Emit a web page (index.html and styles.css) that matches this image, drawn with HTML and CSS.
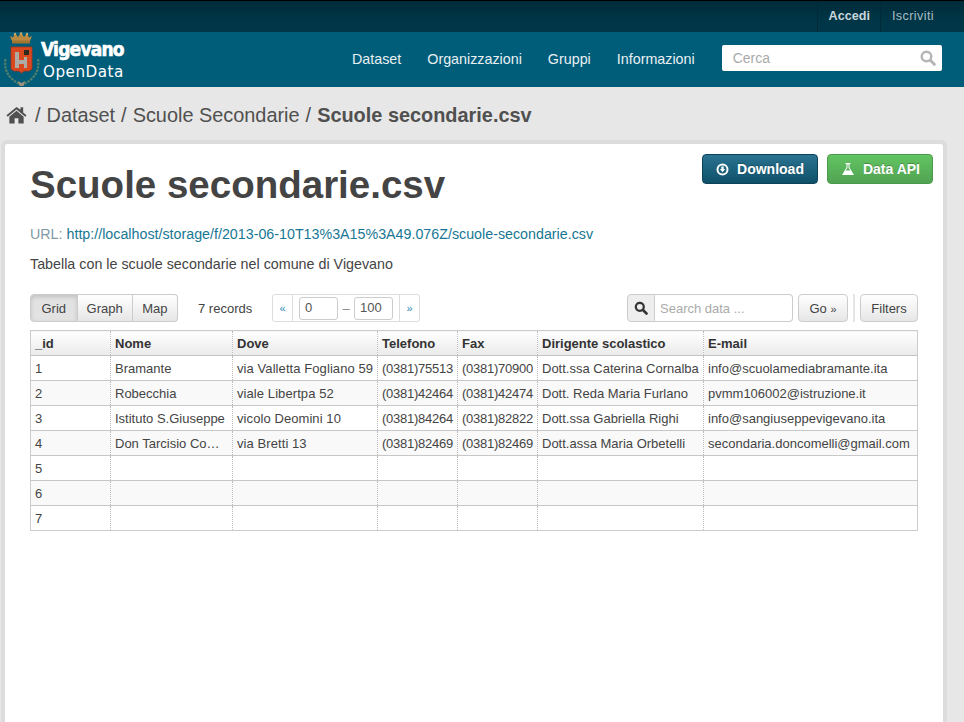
FILE: index.html
```html
<!DOCTYPE html>
<html lang="it">
<head>
    <meta charset="UTF-8">
    <title>Scuole secondarie.csv - Vigevano OpenData</title>
    <link rel="stylesheet" href="styles.css">
</head>
<body>
<div class="page">
    <div class="account-bar">
        <a class="account-link strong" href="#">Accedi</a>
        <a class="account-link" href="#">Iscriviti</a>
    </div>

    <header class="masthead">
        <a class="logo" href="#">
            <svg class="logo-crest" width="38" height="55" viewBox="0 0 38 55">
                <!-- crown -->
                <path d="M9 9L7 4l3 1.500L12 1l3 4 3-4.500L21 5l3-4 2 4.500 3-1.500-2 5z" fill="#b98a42"/>
                <rect x="9" y="8.500" width="18" height="3" fill="#a3742f"/>
                <circle cx="12" cy="2" r="1.200" fill="#c9a768"/>
                <circle cx="18" cy="1.500" r="1.200" fill="#c9a768"/>
                <circle cx="24" cy="2" r="1.200" fill="#c9a768"/>
                <!-- shield -->
                <path d="M8 15h21v22l-3 2-5 0-2.500 2-2.500-2-5 0-3-2z" fill="#d9481f" stroke="#a9351a" stroke-width="0.800"/>
                <path d="M12 20h4v8h5v-3h3v11h-3v-4h-5v4h-4z" fill="#aeaba4"/>
                <rect x="21" y="18" width="5" height="5" fill="#2e2a1e"/>
                <!-- wreath -->
                <g fill="none" stroke="#55806a" stroke-width="2.200" stroke-dasharray="2.500 1">
                    <path d="M2.500 27c-2 12 4 20 14 25"/>
                    <path d="M35 27c2 12-4 20-14 25"/>
                </g>
                <path d="M15 49l3.500 2 3.500-2-1.500 5h-4z" fill="#9c9080"/>
            </svg>
            <span class="logo-text">
                <span class="logo-city">Vigevano</span>
                <span class="logo-sub">OpenData</span>
            </span>
        </a>
        <nav class="main-nav">
            <a href="#">Dataset</a>
            <a href="#">Organizzazioni</a>
            <a href="#">Gruppi</a>
            <a href="#">Informazioni</a>
        </nav>
        <div class="site-search">
            <span>Cerca</span>
            <svg width="16" height="16" viewBox="0 0 16 16">
                <circle cx="6.500" cy="6.500" r="4.800" fill="none" stroke="#b5b5b5" stroke-width="2.400"/>
                <path d="M10.300 10.300l4 4" stroke="#b5b5b5" stroke-width="3" stroke-linecap="round"/>
            </svg>
        </div>
    </header>

    <div class="breadcrumb">
        <svg class="home-icon" width="21" height="18" viewBox="0 0 22 18">
            <path d="M11 0.500L0.500 9.300l1.300 1.500L11 3.200l9.200 7.600 1.300-1.500-3.500-3V1h-2.800v2.600z" fill="#505050"/>
            <path d="M11 4.600L3.500 10.800V18h5.500v-5.500h4V18h5.500v-7.200z" fill="#505050"/>
        </svg>
        <span class="sep">/</span><a href="#">Dataset</a>
        <span class="sep">/</span><a href="#">Scuole Secondarie</a>
        <span class="sep">/</span><a class="active" href="#">Scuole secondarie.csv</a>
    </div>

    <main class="card">
        <div class="title-row">
            <h1>Scuole secondarie.csv</h1>
            <div class="actions">
                <a class="btn-big btn-blue" href="#">
                    <svg width="13" height="13" viewBox="0 0 13 13">
                        <circle cx="6.500" cy="6.500" r="5" fill="none" stroke="#fff" stroke-width="2"/>
                        <path d="M5.300 3.500h2.400v2.500h1.500L6.500 9.200 3.800 6h1.500z" fill="#fff"/>
                    </svg>
                    Download
                </a>
                <a class="btn-big btn-green" href="#">
                    <svg width="14" height="14" viewBox="0 0 14 14">
                        <path d="M4.500 1h5v1h-1v3.500L13 13H1l4.500-7.500V2h-1z" fill="#fff"/>
                        <path d="M6.500 2.500v3.300L4.800 8.500h4.400L7.500 5.800V2.500z" fill="#5cb25c"/>
                    </svg>
                    Data API
                </a>
            </div>
        </div>
        <p class="url"><span>URL:</span> <a href="#">http://localhost/storage/f/2013-06-10T13%3A15%3A49.076Z/scuole-secondarie.csv</a></p>
        <p class="desc">Tabella con le scuole secondarie nel comune di Vigevano</p>

        <div class="toolbar">
            <div class="btn-group">
                <a class="tool-btn on" href="#">Grid</a>
                <a class="tool-btn" href="#">Graph</a>
                <a class="tool-btn" href="#">Map</a>
            </div>
            <span class="records">7 records</span>
            <div class="pager">
                <a class="pager-arrow" href="#">«</a>
                <div class="pager-mid">
                    <span class="pager-input">0</span>
                    <span class="pager-dash">–</span>
                    <span class="pager-input">100</span>
                </div>
                <a class="pager-arrow" href="#">»</a>
            </div>
            <div class="toolbar-right">
                <div class="data-search">
                    <span class="data-search-icon">
                        <svg width="14" height="14" viewBox="0 0 14 14">
                            <circle cx="5.800" cy="5.800" r="4" fill="none" stroke="#333" stroke-width="2.200"/>
                            <path d="M9 9l3.500 3.500" stroke="#333" stroke-width="2.600" stroke-linecap="round"/>
                        </svg>
                    </span>
                    <span class="data-search-input">Search data ...</span>
                </div>
                <a class="tool-btn single go" href="#">Go <small>»</small></a>
                <span class="divider"></span>
                <a class="tool-btn single filters" href="#">Filters</a>
            </div>
        </div>

        <table class="grid">
            <colgroup>
                <col class="c-id"><col class="c-nome"><col class="c-dove"><col class="c-tel"><col class="c-fax"><col class="c-dir"><col class="c-mail">
            </colgroup>
            <thead>
                <tr><th>_id</th><th>Nome</th><th>Dove</th><th>Telefono</th><th>Fax</th><th>Dirigente scolastico</th><th>E-mail</th></tr>
            </thead>
            <tbody>
                <tr><td>1</td><td>Bramante</td><td>via Valletta Fogliano 59</td><td>(0381)75513</td><td>(0381)70900</td><td>Dott.ssa Caterina Cornalba</td><td>info@scuolamediabramante.ita</td></tr>
                <tr><td>2</td><td>Robecchia</td><td>viale Libertpa 52</td><td>(0381)42464</td><td>(0381)42474</td><td>Dott. Reda Maria Furlano</td><td>pvmm106002@istruzione.it</td></tr>
                <tr><td>3</td><td>Istituto S.Giuseppe</td><td>vicolo Deomini 10</td><td>(0381)84264</td><td>(0381)82822</td><td>Dott.ssa Gabriella Righi</td><td>info@sangiuseppevigevano.ita</td></tr>
                <tr><td>4</td><td>Don Tarcisio Comelli</td><td>via Bretti 13</td><td>(0381)82469</td><td>(0381)82469</td><td>Dott.assa Maria Orbetelli</td><td>secondaria.doncomelli@gmail.com</td></tr>
                <tr><td>5</td><td></td><td></td><td></td><td></td><td></td><td></td></tr>
                <tr><td>6</td><td></td><td></td><td></td><td></td><td></td><td></td></tr>
                <tr><td>7</td><td></td><td></td><td></td><td></td><td></td><td></td></tr>
            </tbody>
        </table>
    </main>
</div>
</body>
</html>
```

FILE: styles.css
```css
* {
    box-sizing: border-box;
}

html, body {
    margin: 0;
    height: 100%;
    overflow: hidden;
}

body {
    font-family: "Liberation Sans", Arial, sans-serif;
    font-size: 13px;
    color: #444;
    background-color: #e7e7e7;
}

a {
    text-decoration: none;
    color: inherit;
}

.page {
    height: 722px;
    display: flex;
    flex-direction: column;
}

.account-bar {
    height: 32px;
    flex: none;
    display: flex;
    justify-content: flex-end;
    padding-right: 19px;
    border-top: 1px solid #000;
    background: linear-gradient(#002c3a, #003546 60%, #003748);
}

.account-link {
    height: 31px;
    line-height: 30px;
    padding: 0 11px;
    font-size: 12.600px;
    letter-spacing: 0.400px;
    color: #a9bdc4;
    border-left: 1px solid #002a38;
}

.account-link.strong {
    padding: 0 10px 0 11px;
    letter-spacing: 0;
    font-weight: bold;
    color: #c8d6db;
}

.masthead {
    height: 55px;
    flex: none;
    display: flex;
    align-items: center;
    background-color: #005d7a;
}

.logo {
    display: flex;
    align-self: flex-start;
    width: 323px;
    padding-left: 3px;
}

.logo-crest {
    flex: none;
}

.logo-text {
    display: flex;
    flex-direction: column;
    color: #fff;
    padding-top: 6px;
}

.logo-city {
    font-family: "DejaVu Sans Condensed", "DejaVu Sans", sans-serif;
    font-weight: bold;
    font-size: 19px;
    line-height: 22px;
    letter-spacing: -0.800px;
    -webkit-text-stroke: 0.600px #fff;
}

.logo-sub {
    font-family: "DejaVu Sans", sans-serif;
    font-size: 15.200px;
    line-height: 24px;
    letter-spacing: 0.500px;
    margin-left: 2px;
}

.main-nav {
    display: flex;
    gap: 26px;
    margin: 0 0 1px 29px;
    font-size: 14.300px;
    color: #e8f0f2;
}

.site-search {
    width: 220px;
    height: 26px;
    margin: 0 0 3px 27px;
    padding: 0 6px 0 11px;
    display: flex;
    align-items: center;
    justify-content: space-between;
    background-color: #fff;
    border-radius: 2px;
    font-size: 14px;
    color: #aaa;
}

.breadcrumb {
    height: 53px;
    flex: none;
    display: flex;
    align-items: center;
    padding: 3px 0 0 6px;
    font-size: 19.900px;
    color: #505050;
}

.home-icon {
    flex: none;
    margin-right: 2px;
}

.sep {
    margin: 0 6px;
}

.active {
    font-weight: bold;
}

.card {
    flex: 1;
    margin: 0 17px 0 1px;
    padding: 0 25px;
    background-color: #fff;
    border: 4px solid #dcdcdc;
    border-bottom: none;
    border-radius: 6px 6px 0 0;
    background-clip: padding-box;
}

.title-row {
    display: flex;
    justify-content: space-between;
    align-items: flex-start;
}

h1 {
    margin: 16px 0 0;
    font-size: 38.500px;
    line-height: 50px;
    color: #444;
}

.actions {
    display: flex;
    gap: 9px;
    margin: 10px -15px 0 0;
}

.btn-big {
    display: flex;
    align-items: center;
    gap: 8px;
    height: 30px;
    padding: 0 13px;
    border-radius: 4px;
    font-size: 14px;
    font-weight: bold;
    color: #fff;
    text-shadow: 0 -1px 0 rgba(0, 0, 0, 0.25);
}

.btn-blue {
    padding: 0 13px 0 13px;
    background: linear-gradient(#2a7391, #0f5069);
    border: 1px solid #0b4257;
}

.btn-green {
    padding: 0 12px 0 13px;
    background: linear-gradient(#62c462, #51a351);
    border: 1px solid #4b984b;
}

.url {
    margin: 14px 0 0;
    line-height: 20px;
    font-size: 14.270px;
    color: #187794;
}

.url span {
    color: #7f9aa5;
}

.desc {
    margin: 10px 0 0;
    line-height: 20px;
    font-size: 14.300px;
    color: #444;
}

.toolbar {
    display: flex;
    align-items: center;
    margin-top: 20px;
    height: 28px;
}

.btn-group {
    display: flex;
}

.tool-btn {
    height: 28px;
    line-height: 28px;
    padding: 0 9px;
    font-size: 13px;
    color: #444;
    background: linear-gradient(#fff, #e6e6e6);
    border: 1px solid #ccc;
    border-left: none;
}

.btn-group .tool-btn:first-child {
    padding: 0 10.500px;
    border-left: 1px solid #ccc;
    border-radius: 4px 0 0 4px;
}

.btn-group .tool-btn:last-child {
    padding: 0 9.500px;
    border-radius: 0 4px 4px 0;
}

.tool-btn.on {
    background: #e2e2e2;
    box-shadow: inset 0 2px 4px rgba(0, 0, 0, 0.15);
}

.tool-btn.single {
    border-left: 1px solid #ccc;
    border-radius: 4px;
    text-align: center;
    padding: 0;
}

.go {
    width: 50px;
    margin-left: 5px;
}

.filters {
    width: 58px;
}

.tool-btn small {
    font-size: 11px;
}

.records {
    margin-left: 20px;
    width: 74px;
    padding-top: 1px;
}

.pager {
    display: flex;
    height: 28px;
    border: 1px solid #ddd;
    border-radius: 3px;
}

.pager-arrow {
    width: 19px;
    line-height: 27px;
    text-align: center;
    font-size: 11px;
    color: #2a8ab5;
}

.pager-mid {
    display: flex;
    align-items: center;
    padding: 0 6px;
    border-left: 1px solid #ddd;
    border-right: 1px solid #ddd;
}

.pager-input {
    width: 39px;
    height: 23px;
    line-height: 20px;
    padding-left: 5px;
    border: 1px solid #ccc;
    border-radius: 3px;
    color: #555;
}

.pager-dash {
    width: 16px;
    text-align: center;
    color: #888;
}

.toolbar-right {
    display: flex;
    align-items: center;
    margin-left: auto;
}

.data-search {
    display: flex;
    width: 166px;
    height: 28px;
}

.data-search-icon {
    width: 28px;
    display: flex;
    align-items: center;
    justify-content: center;
    background-color: #eee;
    border: 1px solid #ccc;
    border-radius: 4px 0 0 4px;
}

.data-search-input {
    flex: 1;
    padding-left: 5px;
    line-height: 28px;
    color: #aaa;
    border: 1px solid #ccc;
    border-left: none;
    border-radius: 0 4px 4px 0;
}

.divider {
    width: 2px;
    height: 28px;
    margin: 0 5px;
    background-color: #e5e5e5;
}

.grid {
    width: 887px;
    margin-top: 8px;
    table-layout: fixed;
    border-collapse: collapse;
    border: 1px solid #ccc;
}

.c-id { width: 80px; }
.c-nome { width: 122px; }
.c-dove { width: 145px; }
.c-tel { width: 80px; }
.c-fax { width: 80px; }
.c-dir { width: 166px; }
.c-mail { width: 214px; }

.grid th,
.grid td {
    height: 25px;
    padding: 0 4px;
    text-align: left;
    font-size: 13px;
    white-space: nowrap;
    overflow: hidden;
}

.grid td:nth-child(2) {
    text-overflow: ellipsis;
}

.grid td:nth-child(3) {
    letter-spacing: 0.080px;
}

.grid td:nth-child(4),
.grid td:nth-child(5) {
    letter-spacing: -0.250px;
}

.grid th {
    color: #333;
    background: linear-gradient(#fff, #eaeaea);
    border-bottom: 1px solid #c4c4c4;
    border-left: 1px dotted #bbb;
}

.grid td {
    color: #444;
    border-top: 1px solid #c8c8c8;
    border-left: 1px dotted #bbb;
}

.grid tbody tr:nth-child(even) td {
    background-color: #f9f9f9;
}
```
